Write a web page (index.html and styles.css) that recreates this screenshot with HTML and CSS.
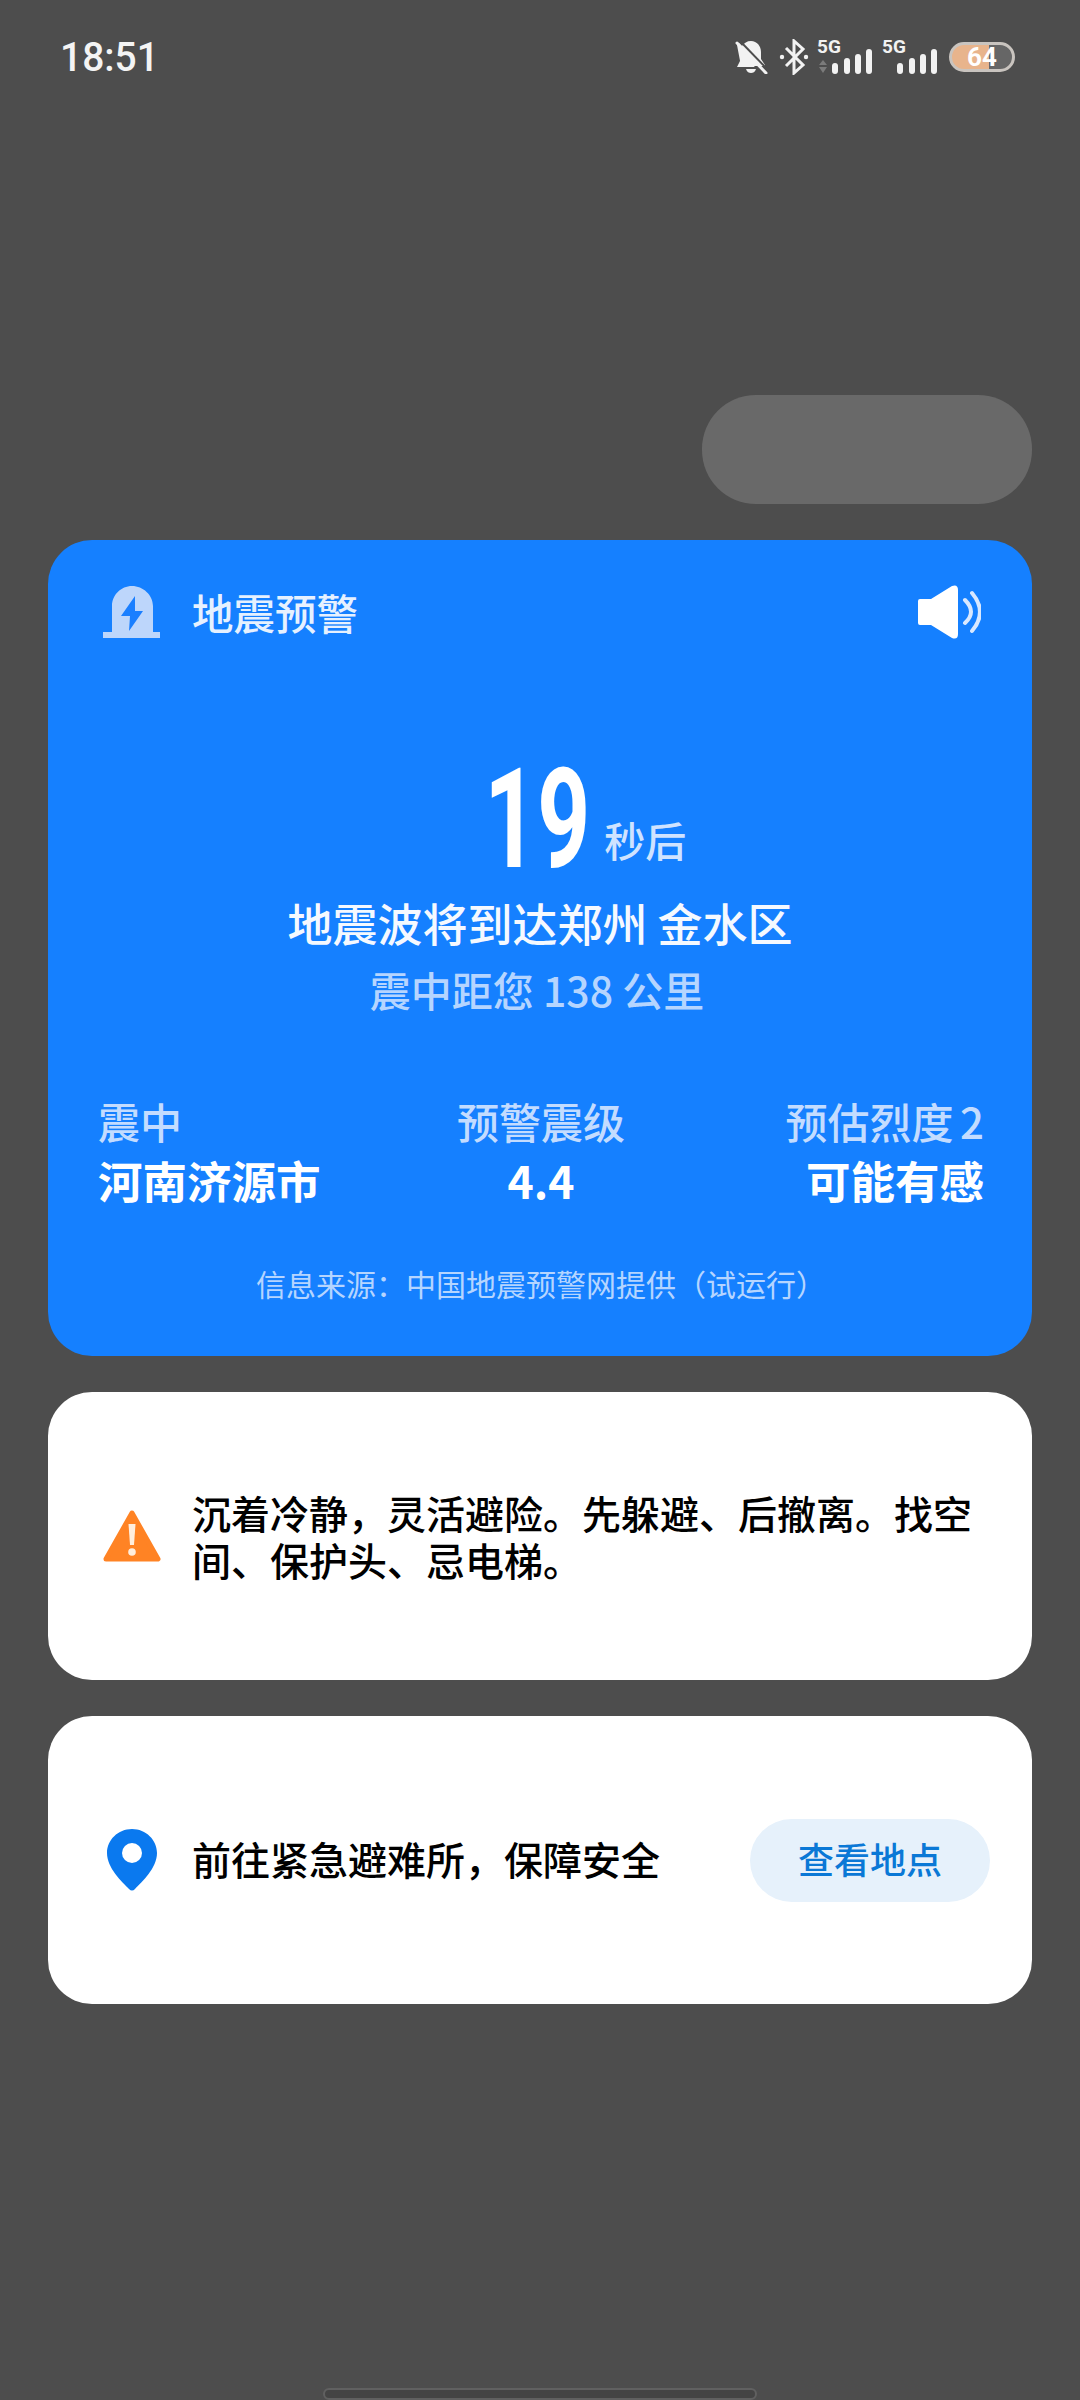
FILE: index.html
```html
<!DOCTYPE html>
<html lang="zh-CN">
<head>
<meta charset="utf-8" />
<title>地震预警</title>
<link rel="stylesheet" href="styles.css">
</head>
<body>
<div class="page">
	<div class="status_bar">
		<span class="status_time">18:51</span>
		<div class="status_icons">
			<svg class="ic_bell" width="34" height="34" viewBox="0 0 34 34">
				<path fill="#f2f2f2" d="M17 1c6 0 10 5 10 11v7l4 6v1H7L3 5 5 3l3 3c2-3 5-5 9-5zM3 27l3-6V14l15 13zM12 29h10c-1 3-3 4-5 4s-4-1-5-4z"/>
				<path stroke="#f2f2f2" stroke-width="3" stroke-linecap="round" d="M3 3l29 30"/>
				<path stroke="#4d4d4d" stroke-width="2" d="M6 1l28 29"/>
			</svg>
			<svg class="ic_bt" width="30" height="36" viewBox="0 0 30 36">
				<path fill="none" stroke="#f2f2f2" stroke-width="3" d="M7 9l17 17-9 8V2l9 8L7 27"/>
				<circle cx="3" cy="18" r="2.2" fill="#f2f2f2"/>
				<circle cx="27" cy="18" r="2.2" fill="#f2f2f2"/>
			</svg>
			<div class="sim">
				<span class="sim_label">5G</span>
				<svg width="56" height="36" viewBox="0 0 56 36">
					<path fill="#7b7b7b" d="M6 21l4 5H2zM2 28h8l-4 6z"/>
					<rect x="15" y="24" width="6" height="11" rx="3" fill="#f2f2f2"/>
					<rect x="27" y="19" width="6" height="16" rx="3" fill="#f2f2f2"/>
					<rect x="38" y="15" width="6" height="20" rx="3" fill="#f2f2f2"/>
					<rect x="49" y="10" width="6" height="25" rx="3" fill="#f2f2f2"/>
				</svg>
			</div>
			<div class="sim">
				<span class="sim_label">5G</span>
				<svg width="56" height="36" viewBox="0 0 56 36">
					<rect x="15" y="24" width="6" height="11" rx="3" fill="#f2f2f2"/>
					<rect x="27" y="19" width="6" height="16" rx="3" fill="#f2f2f2"/>
					<rect x="38" y="15" width="6" height="20" rx="3" fill="#f2f2f2"/>
					<rect x="49" y="10" width="6" height="25" rx="3" fill="#f2f2f2"/>
				</svg>
			</div>
			<div class="battery"><span class="battery_num">64</span></div>
		</div>
	</div>

	<div class="ghost_pill"></div>

	<div class="card_blue">
		<div class="blue_head">
			<svg width="57" height="52" viewBox="0 0 57 52">
				<path fill="#bdd6fb" d="M9 46V20C9 9 18 0 29 0s21 9 21 20v26zM0 46h57v6H0z"/>
				<path fill="#1a7fff" d="M32 10L18 30h9l-1 15 14-20h-8z"/>
			</svg>
			<span class="blue_title">地震预警</span>
			<svg class="ic_sound" width="63" height="54" viewBox="0 0 63 54">
				<path fill="#fff" d="M2 14h11L34 1q6-2 6 4v44q0 6-6 4L13 40H2q-2 0-2-2V16q0-2 2-2z"/>
				<path fill="none" stroke="#d8e8ff" stroke-width="4" stroke-linecap="round" d="M47 15Q59 27 47 38M54 8Q70 27 54 46"/>
			</svg>
		</div>
		<div class="count_row"><span class="count_gap"></span><span class="count_num">19</span><span class="count_unit">秒后</span></div>
		<div class="wave_text">地震波将到达郑州 金水区</div>
		<div class="dist_text">震中距您 138 公里</div>
		<div class="info_row">
			<div class="info_col">
				<div class="info_label">震中</div>
				<div class="info_value">河南济源市</div>
			</div>
			<div class="info_col info_mid">
				<div class="info_label">预警震级</div>
				<div class="info_value">4.4</div>
			</div>
			<div class="info_col info_right">
				<div class="info_label">预估烈度 2</div>
				<div class="info_value">可能有感</div>
			</div>
		</div>
		<div class="source_text">信息来源：中国地震预警网提供（试运行）</div>
	</div>

	<div class="card_white">
		<svg class="card_icon" width="58" height="52" viewBox="0 0 58 52">
			<path fill="#ff8324" stroke="#ff8324" stroke-width="5" stroke-linejoin="round" d="M29 3L55 49H3z"/>
			<path fill="#ffeedd" d="M25.500 14h7l-1.500 21h-4z"/>
			<circle cx="29" cy="42" r="3.800" fill="#ffeedd"/>
		</svg>
		<div class="card_text">沉着冷静，灵活避险。先躲避、后撤离。找空间、保护头、忌电梯。</div>
	</div>

	<div class="card_white">
		<svg class="card_icon" width="58" height="62" viewBox="0 0 58 62">
			<path fill="#0a79ef" d="M29 0c14 0 25 11 25 24 0 15-15 29-22 36q-3 3-6 0C19 53 4 39 4 24 4 11 15 0 29 0z"/>
			<circle cx="29" cy="24" r="10" fill="#fff"/>
		</svg>
		<div class="card_text card_grow">前往紧急避难所，保障安全</div>
		<div class="see_btn">查看地点</div>
	</div>

	<div class="home_bar"></div>
</div>
</body>
</html>
```

FILE: styles.css
```css
html,body{ margin:0; padding:0; background:#4d4d4d;}
body{ font-family:"Noto Sans CJK SC","Noto Sans",sans-serif;}
svg{ display:block; flex:none;}

.page{ width:1080px; height:2400px; padding:0 48px; box-sizing:border-box; display:flex; flex-direction:column; overflow:hidden;}

.status_bar{ height:114px; padding:0 17px 0 12px; display:flex; align-items:center; justify-content:space-between; flex:none;}
.status_time{ font-family:"Roboto",sans-serif; font-size:41px; font-weight:500; color:#f4f4f4; transform:scaleX(.95); transform-origin:left center;}
.status_icons{ display:flex; align-items:center;}
.ic_bell{ margin-right:11px;}
.ic_bt{ margin-right:8px;}
.sim{ display:grid; width:56px; height:36px; margin-right:9px;}
.sim > *{ grid-area:1/1;}
.sim_label{ font-family:"Roboto",sans-serif; font-size:19px; line-height:16px; font-weight:700; color:#f2f2f2;}
.battery{ width:66px; height:30px; box-sizing:border-box; margin-left:2px; border:3px solid #c9c4bf; border-radius:15px; background:linear-gradient(90deg,#e8b48c 0,#e8b48c 62%,#666 62%); display:flex; align-items:center; justify-content:center;}
.battery_num{ font-family:"Roboto",sans-serif; font-size:26px; font-weight:700; color:#fff; line-height:24px;}

.ghost_pill{ align-self:flex-end; flex:none; width:330px; height:109px; margin-top:281px; border-radius:54px; background:#696969;}

.card_blue{ flex:none; height:816px; margin-top:36px; padding:45px 48px 0 50px; box-sizing:border-box; border-radius:44px; background:#1580ff; color:#fff;}
.blue_head{ display:flex; align-items:center; padding-left:5px;}
.blue_title{ margin-left:32px; font-size:41.500px; line-height:53px; font-weight:500; color:#e6f1ff; flex:1;}
.ic_sound{ margin-right:3px;}

.count_row{ display:grid; grid-template-columns:1fr auto 1fr; align-items:baseline; margin-top:120px; height:120px; padding-right:8px;}
.count_num{ font-family:"Roboto",sans-serif; font-size:140px; line-height:120px; font-weight:700; transform:scaleX(.66); margin:0 -24px;}
.count_unit{ align-self:end; margin:0 0 15px 11px; font-size:41px; line-height:50px; font-weight:500; color:#cfe3ff;}

.wave_text{ margin-top:14px; padding-right:2px; text-align:center; font-size:45px; line-height:60px; font-weight:500; color:#f5f9ff;}
.dist_text{ margin-top:6px; padding-right:8px; text-align:center; font-size:41px; line-height:60px; font-weight:500; color:#b5d5ff;}

.info_row{ display:grid; grid-template-columns:1fr 1fr 1fr; margin-top:73px;}
.info_mid{ text-align:center;}
.info_right{ text-align:right;}
.info_label{ font-size:42px; line-height:58px; font-weight:500; color:#c3dcff; word-spacing:-3px;}
.info_value{ font-size:44.500px; line-height:60px; font-weight:700; color:#fff;}

.source_text{ margin-top:51px; text-align:center; font-size:30px; line-height:44px; color:#b5d5ff;}

.card_white{ flex:none; height:288px; margin-top:36px; padding:0 42px 0 55px; box-sizing:border-box; border-radius:44px; background:#fff; display:flex; align-items:center;}
.card_icon{ margin-right:31px;}
.card_text{ font-size:39px; line-height:47px; font-weight:500; color:#000;}
.card_grow{ flex:1; margin-bottom:4px;}
.see_btn{ width:240px; height:83px; line-height:79px; border-radius:42px; background:#e6f1fb; text-align:center; font-size:36px; font-weight:500; color:#0a78d6;}

.home_bar{ align-self:center; margin-top:auto; width:434px; height:12px; box-sizing:border-box; border:2px solid #606060; border-radius:6px; background:#444; flex:none;}
```
